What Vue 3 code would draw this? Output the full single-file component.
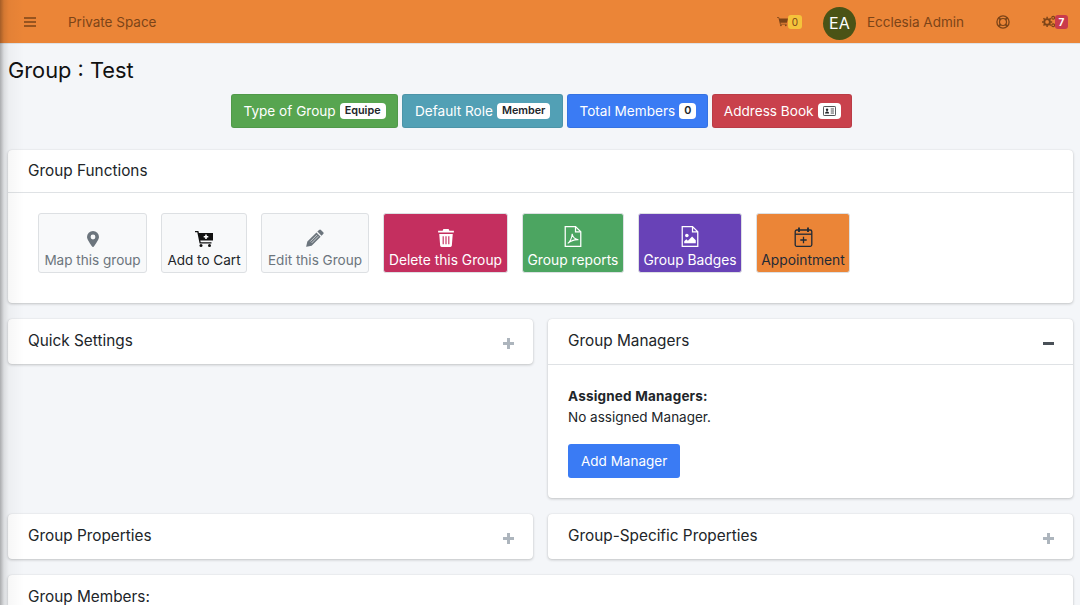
<script setup>
const badges = [
  { label: 'Type of Group', pill: 'Equipe', cls: 'bg-green' },
  { label: 'Default Role', pill: 'Member', cls: 'bg-teal' },
  { label: 'Total Members', pill: '0', cls: 'bg-blue' }
]
</script>

<template>
  <div class="page">
    <div class="edge-shadow"></div>
    <nav class="navbar">
      <svg class="burger" viewBox="0 0 12 10" width="12" height="10">
        <path d="M0 1h12M0 5h12M0 9h12" stroke="#7c4418" stroke-width="1.4" fill="none" />
      </svg>
      <span class="nav-link space">Private Space</span>
      <div class="nav-right">
        <span class="cart">
          <svg viewBox="0 0 14 12" width="11" height="11">
            <path d="M0 .6h2.600l.5 1.600H14l-1.400 5.400H4.400l.3 1.200h7.600v1H3.800L1.900 1.600H0z" fill="#7c4418" />
            <circle cx="5" cy="10.800" r="1.100" fill="#7c4418" />
            <circle cx="11.200" cy="10.800" r="1.100" fill="#7c4418" />
          </svg>
          <span class="nav-badge yellow">0</span>
        </span>
        <span class="avatar">EA</span>
        <span class="nav-link admin">Ecclesia Admin</span>
        <svg class="help" viewBox="0 0 14 14" width="14" height="14">
          <circle cx="7" cy="7" r="6.100" fill="none" stroke="#7c4418" stroke-width="1.300" />
          <circle cx="7" cy="7" r="3.500" fill="none" stroke="#7c4418" stroke-width="1.200" />
          <path d="M2.600 2.600l2.200 2.200M11.400 2.600L9.200 4.800M2.600 11.400l2.200-2.200M11.400 11.400L9.200 9.200" stroke="#7c4418" stroke-width="1.800" />
        </svg>
        <span class="gears">
          <svg viewBox="0 0 14 14" width="13" height="13">
            <circle cx="5.500" cy="7.500" r="3" fill="none" stroke="#7c4418" stroke-width="2" />
            <path d="M5.500 2v2M5.500 11v2M0 7.500h2M9 7.500h2M1.600 3.600l1.400 1.400M8 10l1.400 1.400M9.400 3.600L8 5M3 10l-1.400 1.400" stroke="#7c4418" stroke-width="1.600" />
            <circle cx="12" cy="3" r="1.500" fill="none" stroke="#7c4418" stroke-width="1.200" />
            <circle cx="12" cy="11" r="1.500" fill="none" stroke="#7c4418" stroke-width="1.200" />
          </svg>
          <span class="nav-badge red">7</span>
        </span>
      </div>
    </nav>

    <main class="content">
      <h1 class="title">Group : Test</h1>

      <div class="summary">
        <span v-for="b in badges" :key="b.label" class="summary-btn" :class="b.cls">
          {{ b.label }} <span class="pill">{{ b.pill }}</span>
        </span>
        <span class="summary-btn bg-red">
          Address Book
          <span class="pill">
            <svg viewBox="0 0 16 12" width="13" height="10">
              <rect x=".5" y=".5" width="15" height="11" rx="1" fill="none" stroke="#212529" />
              <circle cx="5" cy="4.500" r="1.500" fill="#212529" />
              <path d="M2.500 9c0-3 5-3 5 0z" fill="#212529" />
              <path d="M9.500 3.500h4M9.500 6h4M9.500 8.500h4" stroke="#212529" />
            </svg>
          </span>
        </span>
      </div>

      <section class="card functions">
        <header class="card-header head-fn">Group Functions</header>
        <div class="fn-body">
          <a class="fn muted w-map">
            <svg viewBox="0 0 12 16" width="12" height="16">
              <path fill-rule="evenodd" d="M6 0a6 6 0 0 1 6 6c0 2.400-3.600 7.400-5.200 9.600a1 1 0 0 1-1.600 0C3.600 13.400 0 8.400 0 6a6 6 0 0 1 6-6zm0 3.600a2.400 2.400 0 1 0 0 4.800 2.400 2.400 0 0 0 0-4.800z" fill="#6c757d" />
            </svg>
            <span>Map this group</span>
          </a>
          <a class="fn dark w-cart">
            <svg viewBox="0 0 18 16" width="18" height="16">
              <path d="M0 0h3.400l.5 2H18v7.500H5.300l.4 1.700h10.800v1.300H4.600L2.300 1.300H0z" fill="#111" />
              <circle cx="6" cy="14.500" r="1.500" fill="#111" />
              <circle cx="14.500" cy="14.500" r="1.500" fill="#111" />
              <path d="M11 3.400v4.600M8.700 5.700h4.600" stroke="#fff" stroke-width="1.600" />
            </svg>
            <span>Add to Cart</span>
          </a>
          <a class="fn muted w-edit">
            <svg viewBox="0 0 16 16" width="18" height="18">
              <path d="M11.600.8a1.200 1.200 0 0 1 1.700 0l2 2a1.200 1.200 0 0 1 0 1.700l-1.500 1.500-3.700-3.700zM9.300 3.100L13 6.800 5 14.800l-4.500 1a.3.300 0 0 1-.3-.4l1-4.300z" fill="#6c757d" />
              <path d="M9.800 5.200l-6 6M11 6.400l-6 6" stroke="#f8f9fa" stroke-width=".6" />
            </svg>
            <span>Edit this Group</span>
          </a>
          <a class="fn solid bg-pink w-delete">
            <svg viewBox="0 0 14 16" width="16" height="18">
              <path d="M4.700 0h4.600l.7 1.500H14v1.700H0V1.500h4zM1 4.400h12l-.8 10.300a1.400 1.400 0 0 1-1.400 1.300H3.200a1.400 1.400 0 0 1-1.400-1.300z" fill="#fff" />
              <path d="M4.500 6.500v7M7 6.500v7M9.500 6.500v7" stroke="#c42f5f" stroke-width="1" />
            </svg>
            <span>Delete this Group</span>
          </a>
          <a class="fn solid bg-report w-report">
            <svg viewBox="0 0 16 20" width="18" height="21" fill="none" stroke="#fff" stroke-width="1.200">
              <path d="M.6.600h9.800l5 5v13.800H.6z" />
              <path d="M10.400.600v5h5" />
              <path d="M3 16.500c2-1 4-5 4.200-9 .5 3 2.500 5 6 5.500-3-.2-7 .8-10.200 3.500z" stroke-width="1" />
            </svg>
            <span>Group reports</span>
          </a>
          <a class="fn solid bg-purple w-badge">
            <svg viewBox="0 0 16 20" width="18" height="21">
              <path d="M.6.600h9.800l5 5v13.800H.6z M10.400.600v5h5" fill="none" stroke="#fff" stroke-width="1.200" />
              <circle cx="5" cy="9" r="1.700" fill="#fff" />
              <path d="M2.500 16.500v-2l2-2 1.500 1.500 4-4 3.500 3.500v3z" fill="#fff" />
            </svg>
            <span>Group Badges</span>
          </a>
          <a class="fn solid bg-orange w-appt">
            <svg viewBox="0 0 18 20" width="19" height="20" fill="none" stroke="#1f2a36" stroke-width="1.300">
              <rect x=".7" y="3" width="16.600" height="16.300" rx="1.500" />
              <path d="M.7 7.200h16.600" />
              <path d="M4.500 .5v4.500M13.500 .5v4.500" stroke-width="1.800" />
              <path d="M9 9.800v6.500M5.800 13h6.400" />
            </svg>
            <span>Appointment</span>
          </a>
        </div>
      </section>

      <div class="columns">
        <div class="col">
          <section class="card">
            <header class="card-header closed">Quick Settings <span class="toggle plus"></span></header>
          </section>
        </div>
        <div class="col">
          <section class="card">
            <header class="card-header">Group Managers <span class="toggle minus"></span></header>
            <div class="mgr-body">
              <p class="assigned"><strong>Assigned Managers:</strong><br />No assigned Manager.</p>
              <a class="add-btn">Add Manager</a>
            </div>
          </section>
        </div>
      </div>

      <div class="columns">
        <div class="col">
          <section class="card">
            <header class="card-header closed">Group Properties <span class="toggle plus"></span></header>
          </section>
        </div>
        <div class="col">
          <section class="card">
            <header class="card-header closed">Group-Specific Properties <span class="toggle plus"></span></header>
          </section>
        </div>
      </div>

      <section class="card">
        <header class="card-header closed">Group Members:</header>
      </section>
    </main>
  </div>
</template>

<style scoped>
.page {
  position: relative;
  height: 605px;
  overflow: hidden;
  background: #f4f6f9;
  font-family: Inter, "Liberation Sans", sans-serif;
  font-size: 14px;
  color: #212529;
}

.edge-shadow {
  position: absolute;
  top: 0;
  left: 0;
  bottom: 0;
  width: 24px;
  background: linear-gradient(to right, rgba(0, 0, 0, 0.3), rgba(0, 0, 0, 0.1) 4px, rgba(0, 0, 0, 0.03) 9px, rgba(0, 0, 0, 0));
  pointer-events: none;
  z-index: 5;
}

.navbar {
  display: flex;
  align-items: center;
  height: 43px;
  padding-left: 24px;
  background: #eb8537;
  border-bottom: 1px solid #dee2e6;
}

.burger {
  margin-right: 32px;
}

.nav-link {
  color: #7c4418;
  font-size: 13.500px;
}

.nav-right {
  display: flex;
  align-items: center;
  margin-left: auto;
}

.cart {
  display: flex;
  align-items: center;
  margin-right: 21px;
}

.nav-badge {
  width: 14px;
  height: 14px;
  display: flex;
  align-items: center;
  justify-content: center;
  font-size: 10px;
  border-radius: 3px;
}

.yellow {
  background: #f5c33b;
  color: #7c4418;
}

.red {
  width: 13px;
  background: #c93b4c;
  color: #fff;
  font-weight: 700;
}

.avatar {
  align-self: flex-start;
  width: 33px;
  height: 33px;
  margin-top: 3px;
  border-radius: 50%;
  background: #4a5316;
  color: #fff;
  font-size: 16px;
  display: flex;
  align-items: center;
  justify-content: center;
  margin-right: 11px;
}

.admin {
  margin-right: 32px;
}

.help {
  margin-right: 32px;
}

.gears {
  display: flex;
  align-items: center;
  margin-right: 12px;
}

.content {
  padding: 0 7px 0 8px;
}

.title {
  margin: 0;
  font-size: 21.800px;
  font-weight: 400;
  line-height: 28px;
  padding-top: 12px;
  color: #111;
}

.summary {
  display: flex;
  justify-content: center;
  gap: 4px;
  margin-top: 10px;
  padding-left: 2px;
}

.summary-btn {
  display: flex;
  align-items: center;
  gap: 4px;
  height: 34px;
  box-sizing: border-box;
  padding: 0 11.500px 1px;
  border-radius: 3px;
  color: #fff;
  font-size: 13.600px;
  border: 1px solid rgba(0, 0, 0, 0.07);
}

.summary-btn.bg-teal {
  padding: 0 12px 1px;
}

.summary-btn.bg-blue {
  padding: 0 11px 1px;
}

.summary-btn.bg-red {
  padding: 0 10.500px 1px;
}

.pill {
  display: inline-flex;
  align-items: center;
  justify-content: center;
  height: 16px;
  min-width: 16px;
  box-sizing: border-box;
  padding: 0 5px;
  border-radius: 4px;
  background: #fff;
  color: #212529;
  font-size: 10.800px;
  font-weight: 600;
}

.bg-green { background: #57a550; }
.bg-teal { background: #52a0b5; }
.bg-blue { background: #3a7bf4; }
.bg-red { background: #c9414c; }

.card {
  background: #fff;
  border-radius: 4px;
  box-shadow: 0 0 1px rgba(0, 0, 0, 0.13), 0 1px 3px rgba(0, 0, 0, 0.2);
  margin-bottom: 16px;
}

.functions {
  margin-top: 22px;
}

.card-header {
  display: flex;
  align-items: center;
  justify-content: space-between;
  height: 46px;
  box-sizing: border-box;
  padding: 0 20px 3px;
  font-size: 15.350px;
  color: #212529;
  border-bottom: 1px solid #dfe2e5;
}

.card-header.closed {
  height: 45px;
  border-bottom: 0;
}

.card-header.head-fn {
  height: 43px;
  padding-bottom: 2px;
}

.fn-body {
  display: flex;
  gap: 14px;
  padding: 20px 30px 30px;
}

.fn {
  display: flex;
  flex-direction: column;
  align-items: center;
  justify-content: flex-end;
  gap: 5px;
  height: 60px;
  box-sizing: border-box;
  padding-bottom: 4px;
  border-radius: 3px;
  border: 1px solid #dde0e3;
  font-size: 13.550px;
  white-space: nowrap;
}

.muted { background: #f8f9fa; color: #6c757d; }
.dark { background: #f8f9fa; color: #212529; }
.solid { color: #fff; font-size: 13.800px; }
.bg-pink { background: #c42f5f; }
.bg-report { background: #4ca561; }
.bg-purple { background: #6842b7; }
.bg-orange { background: #eb8537; color: #1f2a36; }

.w-map { width: 109px; }
.w-cart { width: 86px; }
.w-edit { width: 108px; }
.w-delete { width: 125px; }
.w-report { width: 102px; }
.w-badge { width: 104px; }
.w-appt { width: 94px; }

.columns {
  display: flex;
  gap: 15px;
  align-items: flex-start;
}

.col {
  flex: 1;
  min-width: 0;
}

.toggle {
  width: 11px;
  height: 11px;
  margin-top: 6px;
  margin-right: -1px;
}

.plus {
  background:
    linear-gradient(#adb5bd, #adb5bd) center / 11px 3px no-repeat,
    linear-gradient(#adb5bd, #adb5bd) center / 3px 11px no-repeat;
}

.minus {
  background: linear-gradient(#495057, #495057) center / 11px 3px no-repeat;
}

.mgr-body {
  padding: 21px 20px 20px;
}

.assigned {
  margin: 0 0 16px;
  font-size: 13.500px;
  line-height: 21px;
}

.assigned strong {
  font-weight: 700;
  letter-spacing: 0.2px;
}

.add-btn {
  display: inline-flex;
  align-items: center;
  height: 34px;
  padding: 0 13px;
  box-sizing: border-box;
  border-radius: 3px;
  background: #3a7bf4;
  color: #fff;
  font-size: 13.500px;
}
</style>

<style>
html, body {
  overflow: hidden;
}
</style>
